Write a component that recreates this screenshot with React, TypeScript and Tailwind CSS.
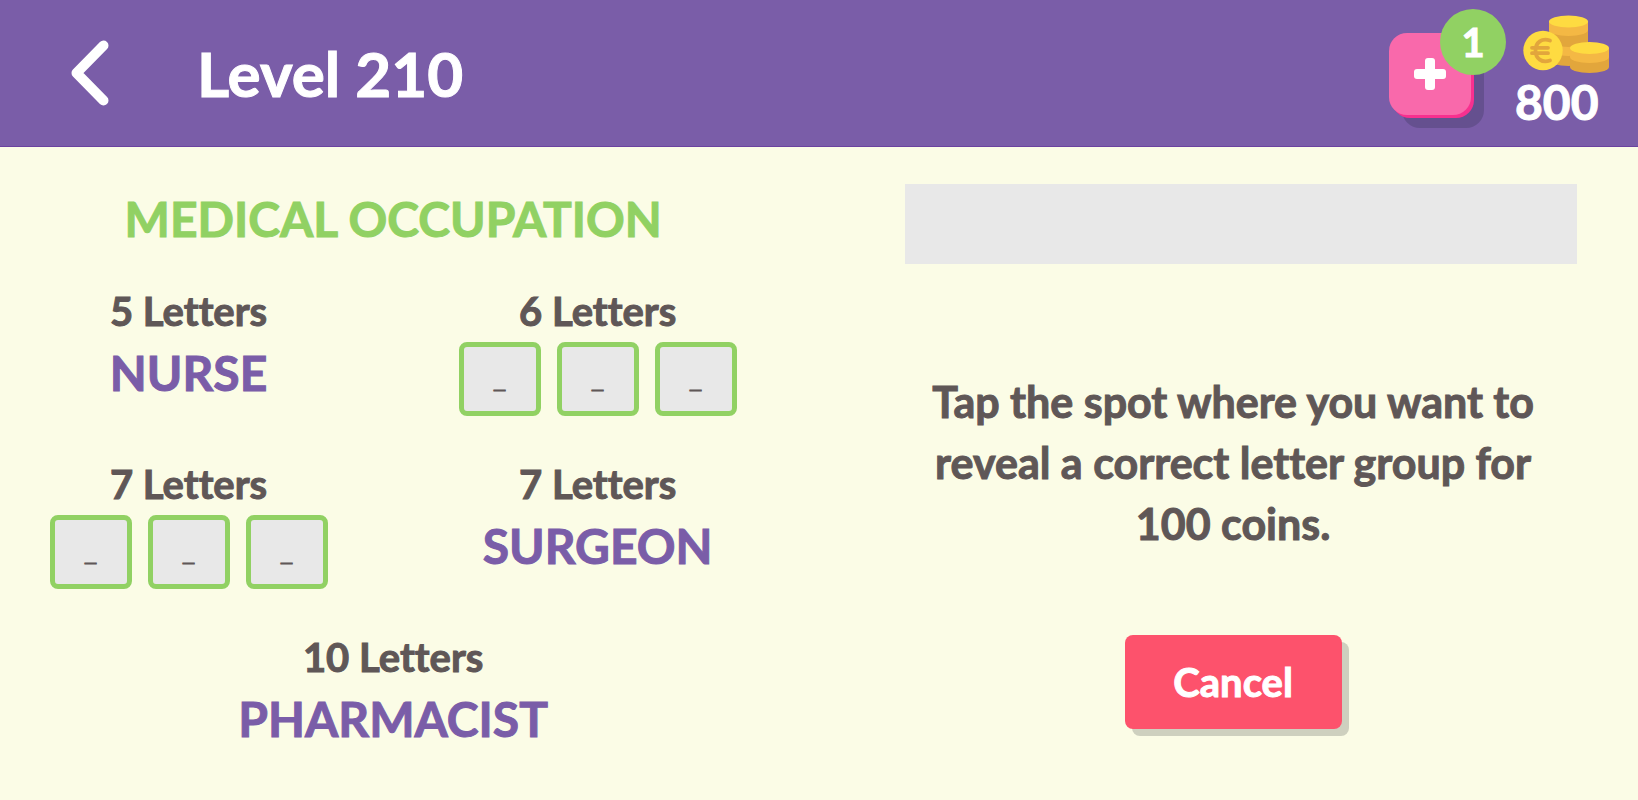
import type { ReactNode } from "react";

type Word = {
  letters: number;
  answer?: string;
  tiles?: number;
};

const words: Word[] = [
  { letters: 5, answer: "NURSE" },
  { letters: 6, tiles: 3 },
  { letters: 7, tiles: 3 },
  { letters: 7, answer: "SURGEON" },
  { letters: 10, answer: "PHARMACIST" },
];

const Coins = () => (
  <svg width="88" height="60" viewBox="0 0 88 60" aria-hidden="true">
    {/* tall stack */}
    <path d="M26 7v38a19.5 6 0 0 0 39 0V7z" fill="#e2a63c" />
    <path d="M26 7v8a19.5 6 0 0 0 39 0V7z" fill="#f4b844" />
    <path d="M26 26v9a19.5 6 0 0 0 39 0v-9a19.5 6 0 0 1-39 0z" fill="#f4b844" />
    <ellipse cx="45.5" cy="6.5" rx="19.5" ry="6" fill="#fedb41" />
    {/* short stack */}
    <path d="M47 33v19a19.5 6 0 0 0 39 0V33z" fill="#e2a63c" />
    <path d="M47 33v9a19.5 6 0 0 0 39 0V33z" fill="#f4b844" />
    <ellipse cx="66.5" cy="33" rx="19.5" ry="6" fill="#fedb41" />
    {/* euro coin */}
    <circle cx="20" cy="35.5" r="19.7" fill="#fedb41" />
    <g fill="none" stroke="#e2a63c" strokeWidth="3.8" strokeLinecap="round">
      <path d="M27 25.500c-8-3-14.500 2-14.500 10s6.500 13 14.500 10" />
      <path d="M9 32.800h16M9 38.200h16" />
    </g>
  </svg>
);

const Header = () => (
  <header className="flex h-[147px] items-start justify-between border-b border-[#6b429f] bg-[#7a5da8] pr-[27px] pl-[71px] text-white">
    <div className="flex h-full items-center">
      <button type="button" aria-label="Back">
        <svg width="38" height="66" viewBox="0 0 38 66" fill="none" stroke="#fff" strokeWidth="10" strokeLinecap="round" strokeLinejoin="round">
          <path d="M32.500 5.500 5.500 33l27 27.500" />
        </svg>
      </button>
      <h1 className="ml-[88px] text-[62px] leading-none font-bold">Level 210</h1>
    </div>
    <div className="flex">
      <div className="relative mt-[33px]">
        <button
          type="button"
          aria-label="Get a hint"
          className="flex size-[82px] items-center justify-center rounded-[18px] bg-[#f969ab] shadow-[3px_3px_0_#f8308f,13px_13px_0_#65508f]"
        >
          <svg width="32" height="32" viewBox="0 0 32 32" fill="#fff">
            <rect x="11" width="10" height="32" rx="3" />
            <rect y="11" width="32" height="10" rx="3" />
          </svg>
        </button>
        <span className="absolute -top-6 left-[51px] flex size-[66px] items-center justify-center rounded-full bg-[#91d163] text-[40px] leading-none font-bold">
          1
        </span>
      </div>
      <div className="mt-[15px] ml-[52px] flex flex-col">
        <Coins />
        <span className="-ml-2 text-[48px] leading-[54px] font-bold">800</span>
      </div>
    </div>
  </header>
);

const Tile = ({ children }: { children: ReactNode }) => (
  <button
    type="button"
    className="flex h-[74px] w-[82px] items-center justify-center rounded-lg border-5 border-[#91d163] bg-[#e8e8e8] pt-1 font-['Liberation_Sans',sans-serif] text-xl leading-none font-bold"
  >
    {children}
  </button>
);

const WordSlot = ({ letters, answer, tiles = 0 }: Word) => (
  <li className="flex flex-col items-center gap-1 last:col-span-2">
    <p className="text-[40px] leading-[54px] font-bold">{letters} Letters</p>
    {answer ? (
      <p className="text-[48px] leading-[62px] font-bold text-[#7a5da8]">{answer}</p>
    ) : (
      <div className="flex gap-4">
        {Array.from({ length: tiles }, (_, i) => (
          <Tile key={i}>_</Tile>
        ))}
      </div>
    )}
  </li>
);

export default function App() {
  return (
    <div className="min-h-screen bg-[#fbfce6] font-[Lato,sans-serif] text-[#5f5757] [font-variant-ligatures:none] [-webkit-text-stroke:1px]">
      <Header />
      <main className="flex">
        <section className="w-[48%] pt-[41px]">
          <h2 className="text-center text-[48px] leading-[62px] font-bold text-[#91d163]">
            MEDICAL OCCUPATION
          </h2>
          <ul className="mt-[34px] grid grid-cols-2 gap-x-8 gap-y-[41px]">
            {words.map((word, i) => (
              <WordSlot key={i} {...word} />
            ))}
          </ul>
        </section>
        <section className="mr-[61px] ml-[103px] flex flex-1 flex-col items-center pt-[37px]">
          <div className="ml-4 h-20 self-stretch bg-[#e8e8e8]" />
          <p className="mt-[107px] max-w-[630px] text-center text-[43px] leading-[61px] font-bold">
            Tap the spot where you want to reveal a correct letter group for 100 coins.
          </p>
          <button
            type="button"
            className="mt-[81px] h-[94px] w-[217px] rounded-lg bg-[#fd526c] text-[40px] font-bold text-white shadow-[7px_7px_0_#ced0bf]"
          >
            Cancel
          </button>
        </section>
      </main>
    </div>
  );
}
